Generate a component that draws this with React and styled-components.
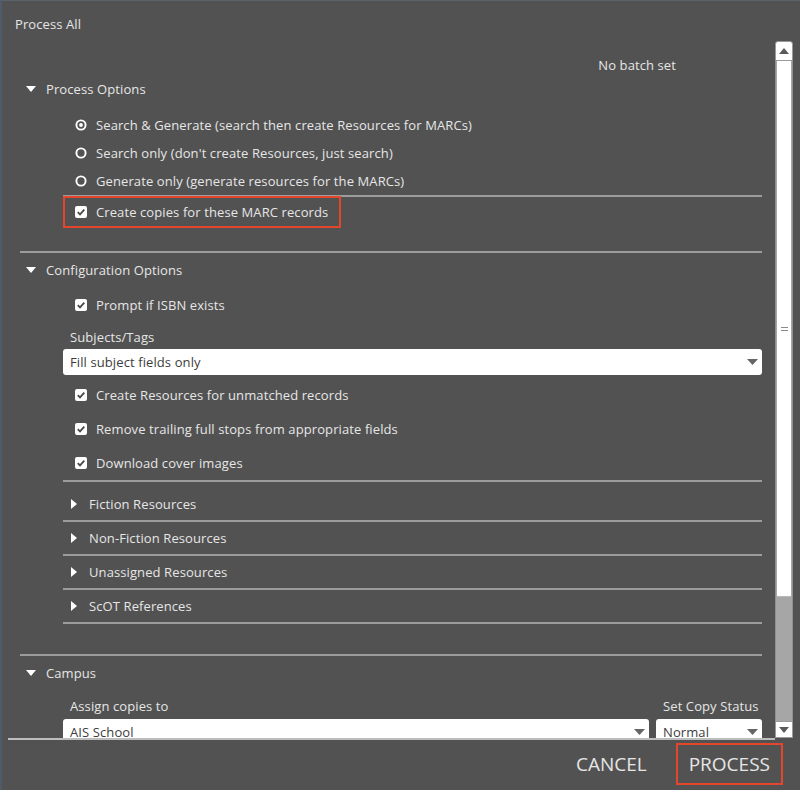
import React from "react";
import styled, { createGlobalStyle } from "styled-components";

const GlobalStyle = createGlobalStyle`
  html, body {
    margin: 0;
    padding: 0;
    background: #525252;
  }
  * {
    box-sizing: border-box;
  }
`;

const Dialog = styled.div`
  width: 800px;
  height: 790px;
  display: flex;
  flex-direction: column;
  background: #525252;
  border-left: 2px solid #4e5b68;
  border-top: 1px solid #58636e;
  font-family: "Open Sans", "Noto Sans", sans-serif;
  font-size: 13px;
  letter-spacing: 0.1px;
  color: #e6e6e6;
  overflow: hidden;
`;

const Title = styled.div`
  height: 39px;
  padding: 14px 0 0 13px;
  line-height: 18px;
`;

const Body = styled.div`
  height: 700px;
  display: flex;
  padding: 0 7px 0 6px;
`;

const Viewport = styled.div`
  width: 767px;
  height: 700px;
  overflow: hidden;
  border-bottom: 2px solid #bdbdbd;
  display: flex;
  flex-direction: column;
`;

const BatchRow = styled.div`
  height: 32px;
  padding: 16px 99px 0 0;
  line-height: 18px;
  text-align: right;
  flex-shrink: 0;
`;

const Section = styled.section`
  margin: 0 13px 0 12px;
  padding-bottom: ${({ $pb }) => $pb || 0}px;
  border-bottom: ${({ $last }) => ($last ? "none" : "2px solid #9c9c9c")};
  flex-shrink: 0;
`;

const SectionHeader = styled.div`
  height: 34px;
  display: flex;
  align-items: center;
  gap: 10px;
  padding-left: 6px;
`;

const Indent = styled.div`
  margin-left: 43px;
  padding-top: ${({ $pt }) => $pt || 0}px;
`;

const OptionRow = styled.div`
  height: ${({ $h }) => $h || 28}px;
  display: flex;
  align-items: center;
  gap: 9px;
  padding-left: 12px;
`;

const Divider = styled.div`
  height: 2px;
  background: #9c9c9c;
`;

const Highlight = styled.div`
  width: 278px;
  height: 32px;
  margin-top: -1px;
  display: flex;
  align-items: center;
  outline: 2px solid #e4462c;
  outline-offset: -2px;
`;

const FieldLabel = styled.div`
  line-height: 20px;
  padding-left: 7px;
  margin-top: ${({ $mt }) => $mt || 0}px;
`;

const Select = styled.div`
  height: 26px;
  margin-top: ${({ $mt }) => $mt || 0}px;
  background: #ffffff;
  border-radius: 3px;
  color: #3c3c3c;
  display: flex;
  align-items: center;
  justify-content: space-between;
  padding: 0 4px 0 7px;
`;

const CheckGroup = styled.div`
  margin-top: 3px;
`;

const CollapsedList = styled.div`
  border-top: 2px solid #9c9c9c;
  padding-top: 6px;
`;

const CollapsedRow = styled.div`
  height: 34px;
  display: flex;
  align-items: center;
  gap: 12px;
  padding-left: 8px;
  border-bottom: 2px solid #9c9c9c;
`;

const FieldsGrid = styled.div`
  display: grid;
  grid-template-columns: 1fr 106px;
  column-gap: 7px;
  margin-top: 6px;
`;

const FieldCol = styled.div`
  display: flex;
  flex-direction: column;
`;

const ScrollBar = styled.div`
  width: 18px;
  display: flex;
  flex-direction: column;
  padding: 1px 0 2px;
`;

const ScrollButton = styled.div`
  height: ${({ $h }) => $h}px;
  background: #ffffff;
  border: 1px solid #9a9a9a;
  border-radius: ${({ $up }) => ($up ? "3px 3px 0 0" : "0")};
  display: flex;
  align-items: center;
  justify-content: center;
`;

const Track = styled.div`
  flex: 1;
  background: #a6a6a6;
  border-left: 1px solid #8f8f8f;
  border-right: 1px solid #8f8f8f;
  display: flex;
  flex-direction: column;
`;

const Thumb = styled.div`
  height: 536px;
  margin: 0 1px;
  background: #ffffff;
  border-bottom: 1px solid #b8b8b8;
  display: flex;
  flex-direction: column;
  align-items: center;
  justify-content: center;
  gap: 2px;
`;

const Grip = styled.div`
  width: 7px;
  height: 1px;
  background: #8a8a8a;
`;

const Footer = styled.div`
  flex: 1;
  display: flex;
  justify-content: flex-end;
  align-items: flex-start;
  gap: 16px;
  padding: 3px 17px 0 0;
`;

const Button = styled.button`
  height: 42px;
  padding: 0 11px;
  background: transparent;
  border: 2px solid ${({ $highlight }) => ($highlight ? "#e4462c" : "transparent")};
  color: #e6e6e6;
  font-family: "Open Sans", "Noto Sans", sans-serif;
  font-size: 19px;
  text-transform: uppercase;
  cursor: pointer;
`;

const Radio = ({ checked }) => (
  <svg width="12" height="12" viewBox="0 0 12 12" aria-hidden="true">
    <circle cx="6" cy="6" r="4.6" fill="none" stroke="#ffffff" strokeWidth="1.9" />
    {checked && <circle cx="6" cy="6" r="1.9" fill="#ffffff" />}
  </svg>
);

const Check = () => (
  <svg width="12" height="12" viewBox="0 0 12 12" aria-hidden="true">
    <rect x="0" y="0" width="12" height="12" rx="2" fill="#ffffff" />
    <path d="M2.8 6.2 L5 8.4 L9.3 3.7" fill="none" stroke="#4a4a4a" strokeWidth="1.8" />
  </svg>
);

const CaretDown = ({ color = "#ffffff", w = 10, h = 6 }) => (
  <svg width={w} height={h} viewBox={`0 0 ${w} ${h}`} aria-hidden="true">
    <polygon points={`0,0 ${w},0 ${w / 2},${h}`} fill={color} />
  </svg>
);

const CaretUp = ({ color = "#5a5a5a", w = 10, h = 6 }) => (
  <svg width={w} height={h} viewBox={`0 0 ${w} ${h}`} aria-hidden="true">
    <polygon points={`0,${h} ${w},${h} ${w / 2},0`} fill={color} />
  </svg>
);

const CaretRight = () => (
  <svg width="6" height="10" viewBox="0 0 6 10" aria-hidden="true">
    <polygon points="0,0 6,5 0,10" fill="#ffffff" />
  </svg>
);

const SelectBox = ({ value, mt }) => (
  <Select $mt={mt}>
    <span>{value}</span>
    <CaretDown color="#666666" w={11} h={6} />
  </Select>
);

const processModes = [
  { label: "Search & Generate (search then create Resources for MARCs)", checked: true },
  { label: "Search only (don't create Resources, just search)" },
  { label: "Generate only (generate resources for the MARCs)" },
];

const configChecks = [
  "Create Resources for unmatched records",
  "Remove trailing full stops from appropriate fields",
  "Download cover images",
];

const collapsed = [
  "Fiction Resources",
  "Non-Fiction Resources",
  "Unassigned Resources",
  "ScOT References",
];

export default function App() {
  return (
    <>
      <GlobalStyle />
      <Dialog>
        <Title>Process All</Title>
        <Body>
          <Viewport>
            <BatchRow>No batch set</BatchRow>

            <Section $pb={23}>
              <SectionHeader>
                <CaretDown />
                Process Options
              </SectionHeader>
              <Indent $pt={5}>
                {processModes.map((m) => (
                  <OptionRow key={m.label}>
                    <Radio checked={m.checked} />
                    {m.label}
                  </OptionRow>
                ))}
                <Divider />
                <Highlight>
                  <OptionRow>
                    <Check />
                    Create copies for these MARC records
                  </OptionRow>
                </Highlight>
              </Indent>
            </Section>

            <Section $pb={30}>
              <SectionHeader>
                <CaretDown />
                Configuration Options
              </SectionHeader>
              <Indent $pt={4}>
                <OptionRow>
                  <Check />
                  Prompt if ISBN exists
                </OptionRow>
                <FieldLabel $mt={8}>Subjects/Tags</FieldLabel>
                <SelectBox value="Fill subject fields only" mt={2} />
                <CheckGroup>
                  {configChecks.map((c) => (
                    <OptionRow key={c} $h={34}>
                      <Check />
                      {c}
                    </OptionRow>
                  ))}
                </CheckGroup>
                <CollapsedList>
                  {collapsed.map((c) => (
                    <CollapsedRow key={c}>
                      <CaretRight />
                      {c}
                    </CollapsedRow>
                  ))}
                </CollapsedList>
              </Indent>
            </Section>

            <Section $last>
              <SectionHeader>
                <CaretDown />
                Campus
              </SectionHeader>
              <Indent>
                <FieldsGrid>
                  <FieldCol>
                    <FieldLabel>Assign copies to</FieldLabel>
                    <SelectBox value="AIS School" mt={3} />
                  </FieldCol>
                  <FieldCol>
                    <FieldLabel>Set Copy Status</FieldLabel>
                    <SelectBox value="Normal" mt={3} />
                  </FieldCol>
                </FieldsGrid>
              </Indent>
            </Section>
          </Viewport>

          <ScrollBar>
            <ScrollButton $up $h={20}>
              <CaretUp />
            </ScrollButton>
            <Track>
              <Thumb>
                <Grip />
                <Grip />
              </Thumb>
            </Track>
            <ScrollButton $h={17}>
              <CaretDown color="#5a5a5a" />
            </ScrollButton>
          </ScrollBar>
        </Body>
        <Footer>
          <Button>Cancel</Button>
          <Button $highlight>Process</Button>
        </Footer>
      </Dialog>
    </>
  );
}
